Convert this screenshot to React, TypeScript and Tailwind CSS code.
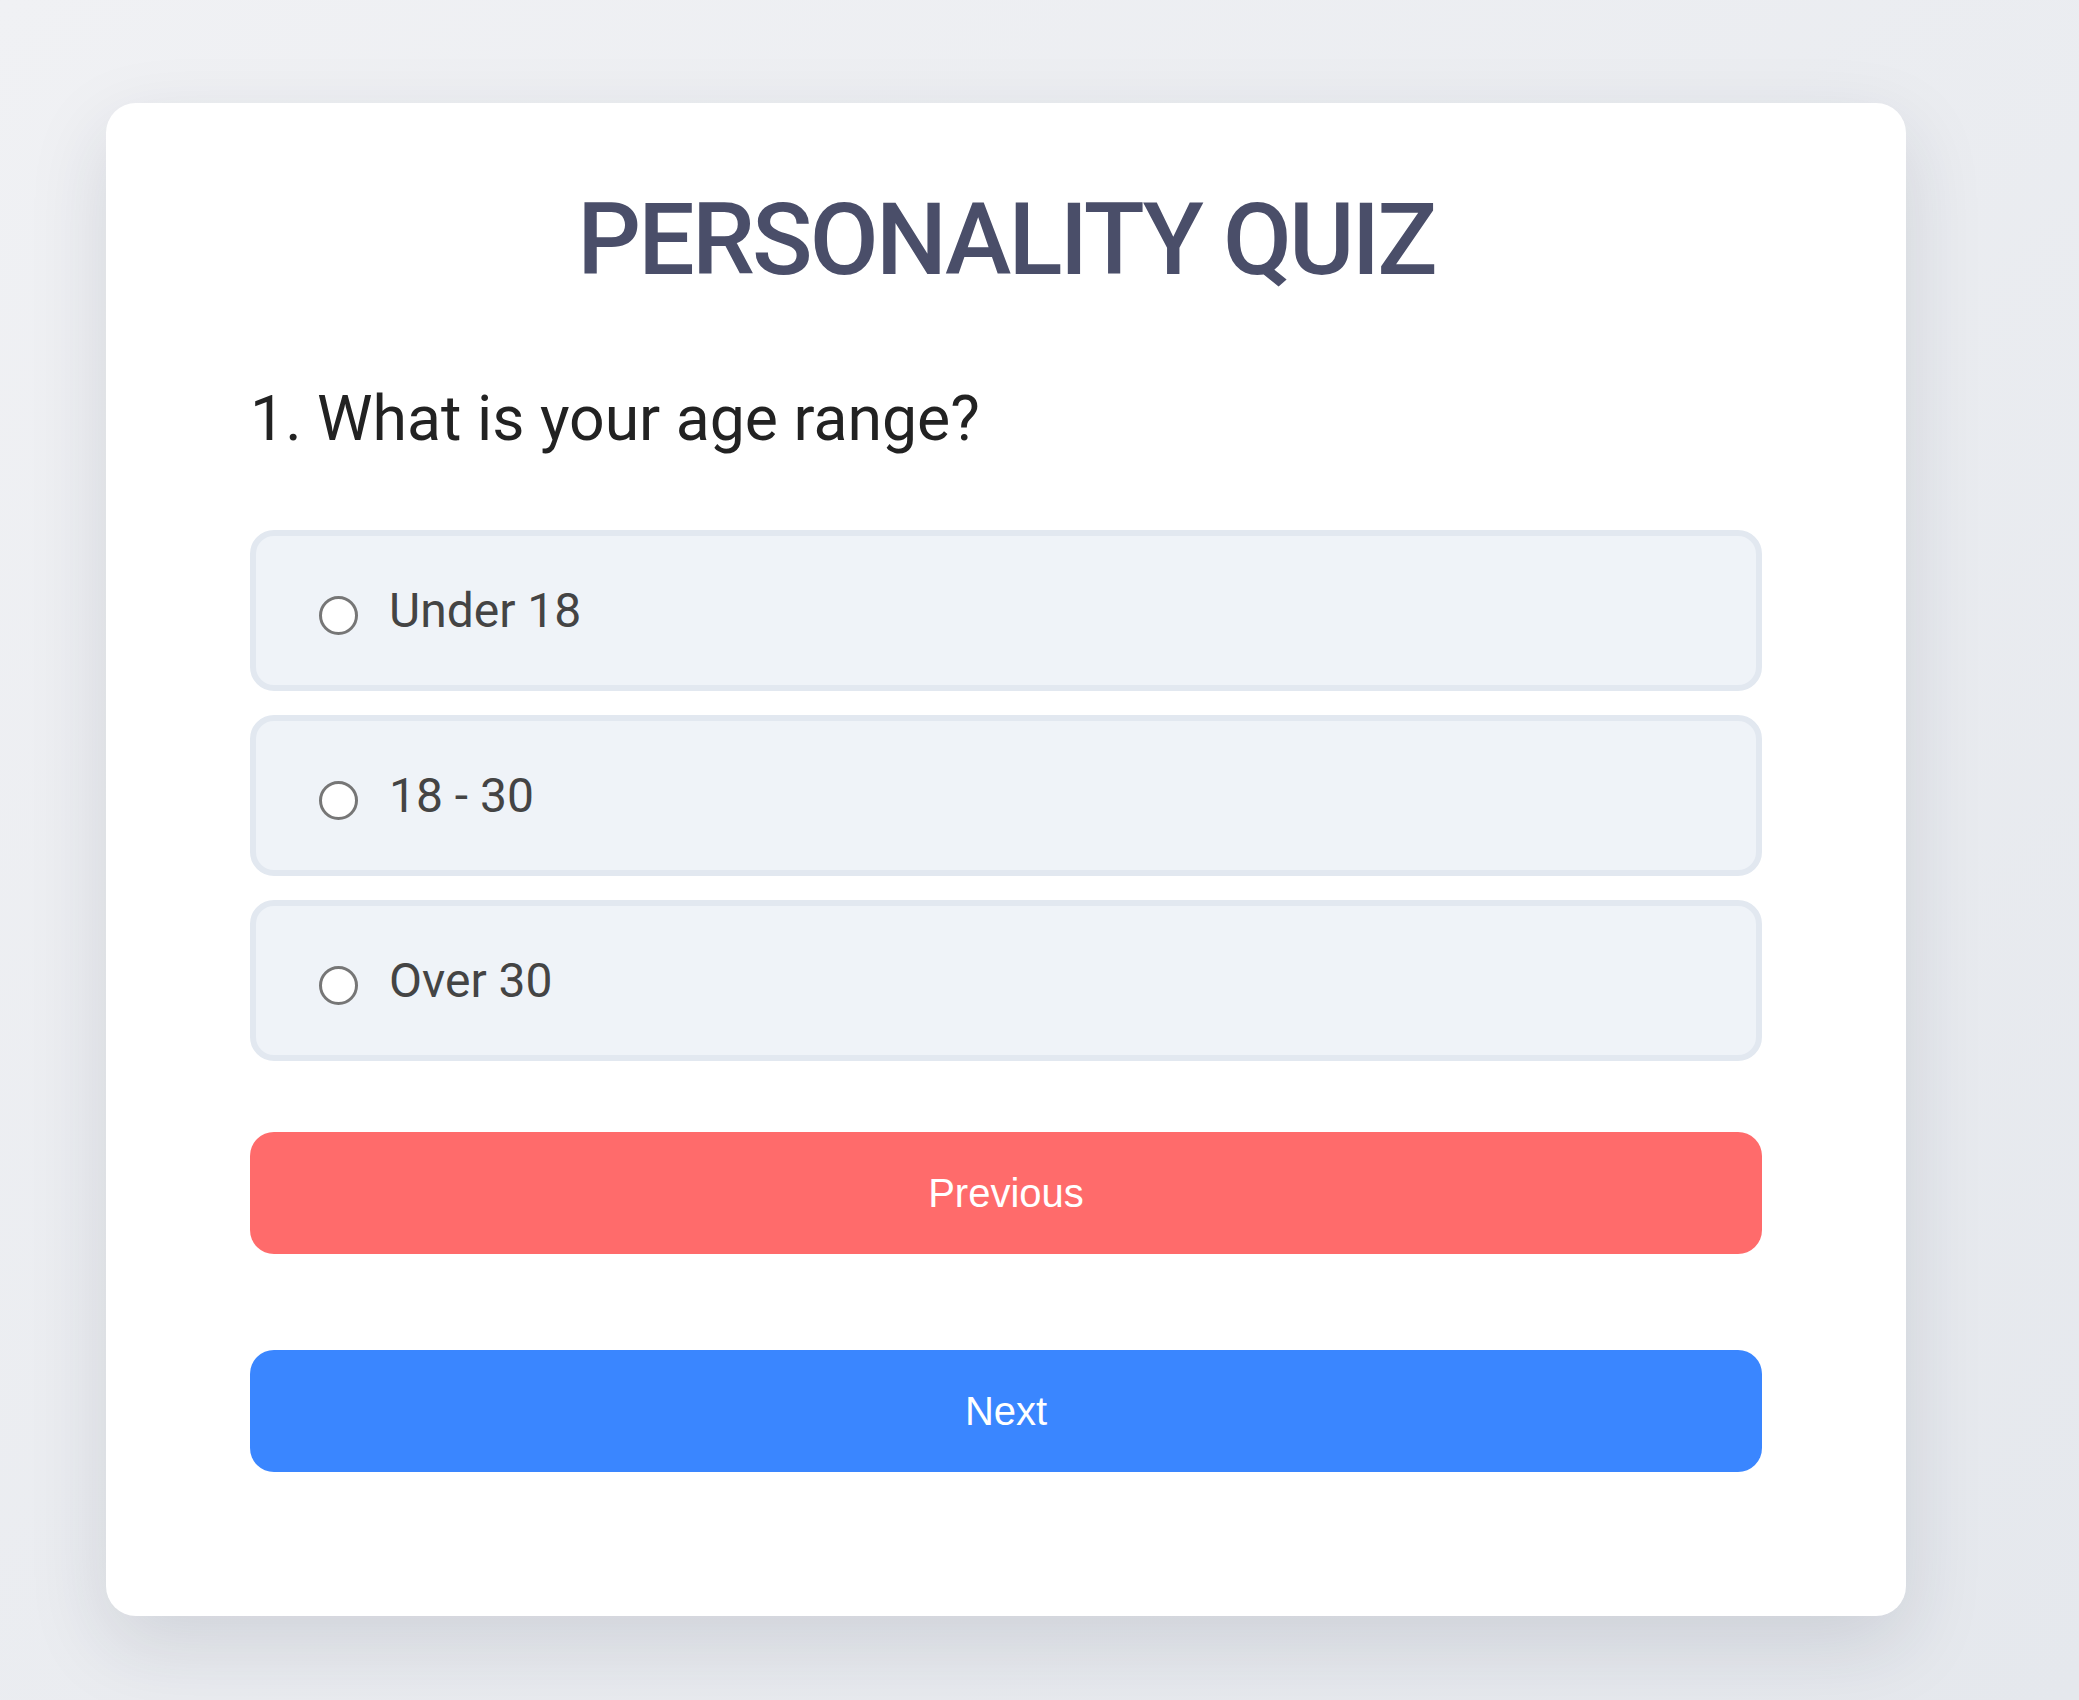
import { useState } from 'react';

const options = ['Under 18', '18 - 30', 'Over 30'];

export default function App() {
  const [selected, setSelected] = useState<number | null>(null);

  return (
    <div className="min-h-[1700px] w-full bg-gradient-to-br from-[#f0f1f4] to-[#e5e8ed] pl-[106px] pt-[103px] font-['Roboto',sans-serif]">
      <div className="flex w-[1800px] flex-col rounded-[30px] bg-white px-[144px] pb-[144px] pt-[78px] shadow-[0_28px_80px_rgba(30,40,60,0.13)]">
        {/* Title */}
        <h1 className="text-center text-[100px] font-medium leading-[117px] tracking-[-2.8px] text-[#4a4e69]">
          PERSONALITY QUIZ
        </h1>

        {/* Question */}
        <h2 className="mt-[84px] text-[62.5px] font-normal leading-[73px] text-[#222222]">
          1. What is your age range?
        </h2>

        {/* Options */}
        <div className="mt-[75px] flex flex-col gap-[24px]">
          {options.map((opt, i) => (
            <label
              key={opt}
              onClick={() => setSelected(i)}
              className="flex h-[161px] cursor-pointer items-center rounded-[24px] border-[6px] border-[#e2e8f0] bg-[#eff3f8] pl-[63px]"
            >
              <span className="mt-[10px] flex h-[39px] w-[39px] shrink-0 items-center justify-center rounded-full border-[3px] border-[#767676] bg-white">
                {selected === i && <span className="h-[21px] w-[21px] rounded-full bg-[#3a86ff]" />}
              </span>
              <span className="ml-[31px] text-[48px] leading-[56px] text-[#444444]">{opt}</span>
            </label>
          ))}
        </div>

        {/* Nav buttons */}
        <button className="mt-[71px] h-[122px] w-full rounded-[24px] bg-[#ff6b6b] font-['Liberation_Sans',Arial,sans-serif] text-[40px] text-white">
          Previous
        </button>
        <button className="mt-[96px] h-[122px] w-full rounded-[24px] bg-[#3a86ff] font-['Liberation_Sans',Arial,sans-serif] text-[40px] text-white">
          Next
        </button>
      </div>
    </div>
  );
}
